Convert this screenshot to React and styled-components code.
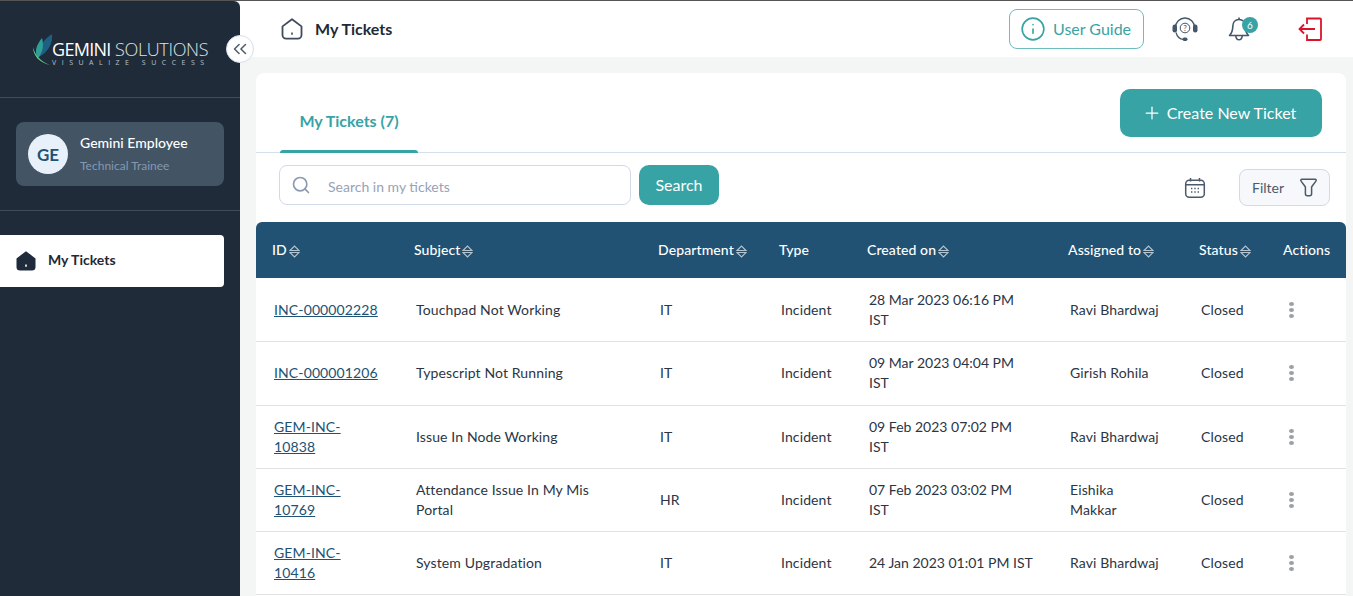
import React from "react";
import styled, { createGlobalStyle } from "styled-components";
import { ChevronsLeft, Info, Plus, Search } from "lucide-react";

const GlobalStyle = createGlobalStyle`
    html, body {
        margin: 0;
        height: 100%;
        overflow: hidden;
        background: #f4f5f5;
        font-family: "Lato", "Liberation Sans", sans-serif;
        color: #1f2937;
    }
    * { box-sizing: border-box; }
`;

const tickets = [
    { id: ["INC-000002228"], subject: "Touchpad Not Working", dept: "IT", created: ["28 Mar 2023 06:16 PM", "IST"], assigned: ["Ravi Bhardwaj"] },
    { id: ["INC-000001206"], subject: "Typescript Not Running", dept: "IT", created: ["09 Mar 2023 04:04 PM", "IST"], assigned: ["Girish Rohila"] },
    { id: ["GEM-INC-", "10838"], subject: "Issue In Node Working", dept: "IT", created: ["09 Feb 2023 07:02 PM", "IST"], assigned: ["Ravi Bhardwaj"] },
    { id: ["GEM-INC-", "10769"], subject: "Attendance Issue In My Mis Portal", dept: "HR", created: ["07 Feb 2023 03:02 PM", "IST"], assigned: ["Eishika", "Makkar"] },
    { id: ["GEM-INC-", "10416"], subject: "System Upgradation", dept: "IT", created: ["24 Jan 2023 01:01 PM IST"], assigned: ["Ravi Bhardwaj"] },
];

const columns = [
    { label: "ID", width: 142, sortable: true },
    { label: "Subject", width: 244, sortable: true },
    { label: "Department", width: 121, sortable: true },
    { label: "Type", width: 88 },
    { label: "Created on", width: 201, sortable: true },
    { label: "Assigned to", width: 131, sortable: true },
    { label: "Status", width: 84, sortable: true },
    { label: "Actions", width: 79 },
];

export default function App() {
    return (
        <Page>
            <GlobalStyle />
            <Sidebar>
                <LogoArea>
                    <LogoMark />
                    <LogoText>
                        <LogoName>
                            <b>GEMINI</b> SOLUTIONS
                        </LogoName>
                        <LogoTag>VISUALIZE SUCCESS</LogoTag>
                    </LogoText>
                    <CollapseButton>
                        <ChevronsLeft size={22} strokeWidth={1.6} />
                    </CollapseButton>
                </LogoArea>
                <ProfileArea>
                    <ProfileCard>
                        <Avatar>GE</Avatar>
                        <div>
                            <ProfileName>Gemini Employee</ProfileName>
                            <ProfileRole>Technical Trainee</ProfileRole>
                        </div>
                    </ProfileCard>
                </ProfileArea>
                <NavItem>
                    <HomeIcon filled />
                    <NavLabel>My Tickets</NavLabel>
                </NavItem>
            </Sidebar>
            <Main>
                <Topbar>
                    <TopTitle>
                        <HomeIcon />
                        <TopLabel>My Tickets</TopLabel>
                    </TopTitle>
                    <TopActions>
                        <GuideButton>
                            <Info size={26} strokeWidth={1.5} />
                            <ButtonLabel>User Guide</ButtonLabel>
                        </GuideButton>
                        <HeadsetIcon />
                        <BellWrap>
                            <BellIcon />
                            <Badge>6</Badge>
                        </BellWrap>
                        <LogoutIcon />
                    </TopActions>
                </Topbar>
                <Content>
                    <Card>
                        <CardHeader>
                            <Tab>My Tickets (7)</Tab>
                            <CreateButton>
                                <Plus size={20} strokeWidth={1.5} />
                                <ButtonLabel>Create New Ticket</ButtonLabel>
                            </CreateButton>
                        </CardHeader>
                        <Toolbar>
                            <SearchBox>
                                <Search size={20} strokeWidth={2} color="#8d99ae" />
                                <SearchInput placeholder="Search in my tickets" />
                            </SearchBox>
                            <SearchButton>
                                <ButtonLabel>Search</ButtonLabel>
                            </SearchButton>
                            <ToolbarRight>
                                <CalendarIcon />
                                <FilterButton>
                                    Filter
                                    <FunnelIcon />
                                </FilterButton>
                            </ToolbarRight>
                        </Toolbar>
                        <Table>
                            <colgroup>
                                {columns.map((col) => (
                                    <col key={col.label} style={{ width: col.width }} />
                                ))}
                            </colgroup>
                            <thead>
                                <tr>
                                    {columns.map((col) => (
                                        <Th key={col.label}>
                                            {col.label}
                                            {col.sortable && <SortIcon />}
                                        </Th>
                                    ))}
                                </tr>
                            </thead>
                            <tbody>
                                {tickets.map((t) => (
                                    <Row key={t.id.join("")}>
                                        <Td>
                                            <IdLink>
                                                {t.id.map((part) => (
                                                    <Line key={part}>{part}</Line>
                                                ))}
                                            </IdLink>
                                        </Td>
                                        <Td>{t.subject}</Td>
                                        <Td>{t.dept}</Td>
                                        <Td>Incident</Td>
                                        <DateTd>
                                            {t.created.map((part) => (
                                                <Line key={part}>{part}</Line>
                                            ))}
                                        </DateTd>
                                        <Td>
                                            {t.assigned.map((part) => (
                                                <Line key={part}>{part}</Line>
                                            ))}
                                        </Td>
                                        <Td>Closed</Td>
                                        <Td>
                                            <Dots>
                                                <i />
                                                <i />
                                                <i />
                                            </Dots>
                                        </Td>
                                    </Row>
                                ))}
                            </tbody>
                        </Table>
                    </Card>
                </Content>
            </Main>
        </Page>
    );
}

function LogoMark() {
    return (
        <LogoSvg viewBox="0 0 20 32" width="20" height="32">
            <path d="M6 24C4 18 7 9 19 1c1 9-3 17-13 23z" fill="#1f5f82" />
            <path d="M5 25C1 20 3 12 9 5c2 7 1 14-4 20z" fill="#2f9f9a" />
            <path d="M17 32C7 30 0 23 0 14c2 8 7 14 17 18z" fill="#62cf8d" />
        </LogoSvg>
    );
}

function HomeIcon({ filled }) {
    return (
        <svg width="22" height="22" viewBox="0 0 22 22">
            <path
                d="M1.500 8.400 11 1.200l9.500 7.200V17a3.600 3.600 0 0 1-3.600 3.600H5.100A3.600 3.600 0 0 1 1.500 17z"
                fill={filled ? "#1f2a3a" : "none"}
                stroke="#3f4c5e"
                strokeWidth={filled ? 0 : 1.8}
                strokeLinejoin="round"
            />
            <path d="M11 14.500v2.200" stroke={filled ? "#fff" : "#3f4c5e"} strokeWidth="1.600" />
        </svg>
    );
}

function HeadsetIcon() {
    return (
        <svg width="26" height="26" viewBox="0 0 26 26" fill="none">
            <path d="M3.500 11.500a9.500 9.500 0 0 1 19 0" stroke="#44566a" strokeWidth="1.400" />
            <rect x="0.500" y="8.500" width="4.500" height="8" rx="2.200" fill="#44566a" />
            <rect x="21" y="8.500" width="4.500" height="8" rx="2.200" fill="#44566a" />
            <path d="M4 16.500c1 4 3.500 6.500 7.500 7" stroke="#44566a" strokeWidth="1.200" />
            <rect x="10.500" y="21.500" width="5" height="3.400" rx="1.700" fill="#44566a" />
            <circle cx="13" cy="12" r="4.800" stroke="#44566a" strokeWidth="1" />
            <text x="13" y="14.800" textAnchor="middle" fontSize="8" fontFamily="Lato, sans-serif" fill="#44566a">?</text>
        </svg>
    );
}

function BellIcon() {
    return (
        <svg width="24" height="26" viewBox="0 0 24 26" fill="none" stroke="#44566a" strokeWidth="1.600" strokeLinejoin="round">
            <path d="M12 3.500c-4 0-6.200 3-6.200 6.800 0 5-1.300 7.200-3.300 9.200h19c-2-2-3.300-4.200-3.300-9.200 0-3.800-2.200-6.800-6.200-6.800z" />
            <path d="M12 1.500v2" />
            <path d="M8.800 20c.300 2.600 1.500 3.800 3.200 3.800s2.900-1.200 3.200-3.800" />
        </svg>
    );
}

function LogoutIcon() {
    return (
        <svg width="24" height="24" viewBox="0 0 24 24" fill="none" stroke="#d9142b" strokeWidth="1.800">
            <path d="M9 7V1.500h13a1 1 0 0 1 1 1V22a1 1 0 0 1-1 1H9v-5.500" />
            <path d="M17 12H1.500M6 7.500 1.500 12 6 16.500" />
        </svg>
    );
}

function CalendarIcon() {
    return (
        <svg width="22" height="22" viewBox="0 0 22 22" fill="none" stroke="#4b5a6b" strokeWidth="1.500">
            <rect x="1.700" y="3.200" width="18.600" height="17.100" rx="3.500" />
            <path d="M1.700 7.700h18.600M6.500 1v3.500M15.500 1v3.500" />
            <path d="M7 11.500h1.400M10.300 11.500h1.400M13.600 11.500h1.400M7 15h1.400M10.300 15h1.400M13.600 15h1.400" strokeWidth="1.600" />
        </svg>
    );
}

function FunnelIcon() {
    return (
        <svg width="17" height="19" viewBox="0 0 17 19" fill="none" stroke="#4b5a6b" strokeWidth="1.500" strokeLinejoin="round">
            <path d="M1.800 1.200h13.400a1 1 0 0 1 .8 1.600c-1.500 2.300-3 4.200-4.400 6.200v6.800a2 2 0 0 1-2 2H7.400a2 2 0 0 1-2-2V9C4 7 2.500 5.100 1 2.800a1 1 0 0 1 .8-1.600z" />
        </svg>
    );
}

function SortIcon() {
    return (
        <SortSvg width="11" height="13" viewBox="0 0 11 13" fill="none" stroke="#b4c5d2" strokeWidth="1.100">
            <path d="M1 5.500 5.500 1 10 5.500z" />
            <path d="M1 7.500 5.500 12 10 7.500z" />
        </SortSvg>
    );
}

const Page = styled.div`
    display: flex;
    height: 596px;
    border-top: 1px solid #555;
    overflow: hidden;
`;

const Sidebar = styled.aside`
    width: 240px;
    flex-shrink: 0;
    background: #202b3a;
    border-top-right-radius: 6px;
`;

const LogoArea = styled.div`
    position: relative;
    height: 97px;
    display: flex;
    align-items: flex-start;
    padding: 32px 0 0 33px;
    border-bottom: 1px solid #3d4d5c;
`;

const LogoSvg = styled.svg`
    margin-right: -1px;
    flex-shrink: 0;
`;

const LogoText = styled.div`
    margin-top: 8px;
    color: #dfe3e8;
`;

const LogoName = styled.div`
    font-family: "Open Sans", sans-serif;
    font-size: 18px;
    line-height: 16px;
    font-weight: 300;
    letter-spacing: -0.35px;
    white-space: nowrap;

    b {
        color: #fff;
        font-weight: 400;
        letter-spacing: -0.7px;
    }
`;

const LogoTag = styled.div`
    font-family: "Open Sans", sans-serif;
    font-size: 7px;
    line-height: 9px;
    margin-top: 1px;
    letter-spacing: 5.500px;
    white-space: nowrap;
    color: #b9c0c8;
`;

const CollapseButton = styled.div`
    position: absolute;
    top: 34px;
    left: 226px;
    width: 28px;
    height: 28px;
    border-radius: 50%;
    background: #fff;
    border: 1px solid #d5deea;
    color: #4b5a6b;
    display: flex;
    align-items: center;
    justify-content: center;
`;

const ProfileArea = styled.div`
    height: 113px;
    padding: 24px 16px 0;
    border-bottom: 1px solid #3d4d5c;
`;

const ProfileCard = styled.div`
    height: 64px;
    background: #435464;
    border-radius: 8px;
    display: flex;
    align-items: center;
    gap: 12px;
    padding: 0 12px;
`;

const Avatar = styled.div`
    width: 40px;
    height: 40px;
    border-radius: 50%;
    background: #e8f1fa;
    color: #215273;
    font-size: 17px;
    font-weight: 700;
    display: flex;
    align-items: center;
    justify-content: center;
`;

const ProfileName = styled.div`
    font-size: 14px;
    line-height: 20px;
    font-weight: 500;
    color: #fff;
    margin-top: -2px;
`;

const ProfileRole = styled.div`
    font-size: 12px;
    line-height: 16px;
    margin-top: 5px;
    color: #8399b3;
`;

const NavItem = styled.div`
    margin-top: 24px;
    width: 224px;
    height: 52px;
    background: #fff;
    border-radius: 0 4px 4px 0;
    display: flex;
    align-items: center;
    gap: 11px;
    padding-left: 15px;
    font-size: 14px;
    font-weight: 700;
    color: #1f2937;
`;

const NavLabel = styled.span`
    padding-bottom: 3px;
`;

const Main = styled.main`
    flex: 1;
    min-width: 0;
    display: flex;
    flex-direction: column;
`;

const Topbar = styled.header`
    height: 56px;
    background: #fff;
    flex-shrink: 0;
    display: flex;
    align-items: center;
    justify-content: space-between;
    padding: 0 31px 0 41px;
`;

const TopTitle = styled.div`
    display: flex;
    align-items: center;
    gap: 12px;
    font-size: 16px;
    font-weight: 700;
    color: #1f2937;
`;

const TopLabel = styled.span`
    padding-bottom: 2px;
`;

const TopActions = styled.div`
    display: flex;
    align-items: center;
`;

const GuideButton = styled.div`
    width: 135px;
    height: 40px;
    border: 1px solid #6fbcbe;
    border-radius: 8px;
    display: flex;
    align-items: center;
    gap: 7px;
    padding-left: 10px;
    font-size: 16px;
    color: #38a3a5;
    margin-right: 28px;
`;

const BellWrap = styled.div`
    position: relative;
    display: flex;
    margin: 0 47px 0 29px;
`;

const Badge = styled.span`
    position: absolute;
    top: 1px;
    left: 15px;
    width: 16px;
    height: 16px;
    border-radius: 50%;
    background: #38a3a5;
    color: #fff;
    font-size: 10px;
    display: flex;
    align-items: center;
    justify-content: center;
`;

const Content = styled.div`
    flex: 1;
    min-height: 0;
    padding: 16px 7px 0 16px;
`;

const Card = styled.section`
    background: #fff;
    border-radius: 8px 8px 0 0;
    height: 100%;
`;

const CardHeader = styled.div`
    height: 80px;
    border-bottom: 1px solid #d3dfea;
    display: flex;
    justify-content: space-between;
    align-items: flex-start;
    padding: 16px 24px 0;
`;

const Tab = styled.div`
    position: relative;
    width: 138px;
    height: 64px;
    line-height: 32px;
    padding-top: 16px;
    text-align: center;
    font-size: 16px;
    font-weight: 700;
    color: #38a3a5;

    &::after {
        content: "";
        position: absolute;
        left: 0;
        right: 0;
        bottom: 0;
        height: 3px;
        border-radius: 3px 3px 0 0;
        background: #38a3a5;
    }
`;

const CreateButton = styled.div`
    width: 202px;
    height: 48px;
    padding-right: 4px;
    border-radius: 10px;
    background: #38a3a5;
    color: #fff;
    font-size: 16px;
    display: flex;
    align-items: center;
    justify-content: center;
    gap: 5px;
`;

const ButtonLabel = styled.span`
    padding-bottom: 2px;
`;

const Toolbar = styled.div`
    display: flex;
    align-items: flex-start;
    padding: 12px 16px 16px 23px;
`;

const SearchBox = styled.div`
    width: 352px;
    height: 40px;
    border: 1px solid #d0dae8;
    border-radius: 8px;
    display: flex;
    align-items: center;
    gap: 17px;
    padding-left: 11px;
`;

const SearchInput = styled.input`
    border: 0;
    outline: 0;
    flex: 1;
    min-width: 0;
    padding: 2px 0 0;
    font: inherit;
    font-size: 14px;
    color: #1f2937;

    &::placeholder {
        color: #98a2b8;
        opacity: 1;
    }
`;

const SearchButton = styled.div`
    width: 80px;
    height: 40px;
    margin-left: 8px;
    border-radius: 10px;
    background: #38a3a5;
    color: #fff;
    font-size: 16px;
    display: flex;
    align-items: center;
    justify-content: center;
`;

const ToolbarRight = styled.div`
    margin-left: auto;
    margin-top: 4px;
    display: flex;
    align-items: center;
    gap: 33px;
`;

const FilterButton = styled.div`
    width: 91px;
    height: 37px;
    border: 1px solid #d0dae8;
    border-radius: 8px;
    background: #f6f8fb;
    color: #4b5a6b;
    font-size: 14px;
    display: flex;
    align-items: center;
    justify-content: space-between;
    padding: 0 12px;
`;

const Table = styled.table`
    width: 1090px;
    table-layout: fixed;
    border-collapse: separate;
    border-spacing: 0;
    font-size: 14px;
`;

const Th = styled.th`
    height: 56px;
    padding: 0 16px 2px;
    background: #215273;
    color: #fff;
    font-size: 14px;
    font-weight: 500;
    letter-spacing: 0.1px;
    text-align: left;
    white-space: nowrap;

    &:first-child {
        border-top-left-radius: 6px;
    }

    &:last-child {
        border-top-right-radius: 6px;
    }
`;

const SortSvg = styled.svg`
    margin-left: 2px;
    vertical-align: -3px;
`;

const Row = styled.tr`
    height: 63px;

    &:nth-child(-n + 2) {
        height: 64px;
    }

    &:nth-child(2) td {
        padding-bottom: 2px;
    }
`;

const Td = styled.td`
    padding: 0 18px;
    border-bottom: 1px solid #e2e2e2;
    line-height: 20px;
    letter-spacing: 0.12px;
    color: #2b3544;
`;

const DateTd = styled(Td)`
    letter-spacing: 0;
`;

const IdLink = styled.a`
    color: #215273;
    text-decoration: underline;
`;

const Line = styled.span`
    display: block;
    white-space: nowrap;
`;

const Dots = styled.div`
    display: flex;
    flex-direction: column;
    gap: 2px;
    margin-left: 4px;
    width: 5px;

    i {
        width: 5px;
        height: 4px;
        border-radius: 50%;
        background: #9aa0a6;
    }
`;
